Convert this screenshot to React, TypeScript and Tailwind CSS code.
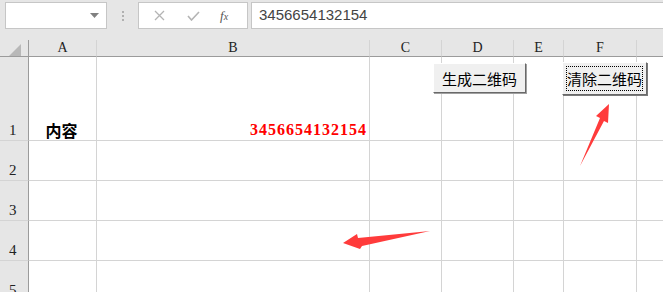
import React from 'react';

const cols = [
  { label: '', w: 'w-[29px]' },
  { label: 'A', w: 'w-[68px]' },
  { label: 'B', w: 'w-[273px]' },
  { label: 'C', w: 'w-[72px]' },
  { label: 'D', w: 'w-[72px]' },
  { label: 'E', w: 'w-[50px]' },
  { label: 'F', w: 'w-[73px]' },
  { label: '', w: 'w-[37px]' },
];

const rows = [
  { n: '1', h: 'h-[84px]' },
  { n: '2', h: 'h-[40px]' },
  { n: '3', h: 'h-[40px]' },
  { n: '4', h: 'h-[40px]' },
  { n: '5', h: 'h-[40px]' },
];

function TopBar() {
  return (
    <div className="flex h-[40px] items-start gap-0 pt-[2px] pl-[5px]">
      <div className="flex h-[27px] w-[102px] items-center justify-end border border-[#c6c6c6] bg-white pr-[7px]">
        <svg width="9" height="5" viewBox="0 0 9 5">
          <path d="M0 0h9L4.5 5z" fill="#808080" />
        </svg>
      </div>
      <div className="flex h-[27px] w-[31px] flex-col items-center justify-center gap-[2px]">
        <span className="h-[2px] w-[2px] bg-[#b0b0b0]" />
        <span className="h-[2px] w-[2px] bg-[#b0b0b0]" />
        <span className="h-[2px] w-[2px] bg-[#b0b0b0]" />
      </div>
      <div className="flex h-[27px] w-[110px] items-center border border-[#c6c6c6] bg-white">
        <svg className="ml-[15px]" width="11" height="11" viewBox="0 0 11 11">
          <path d="M1 1l9 9M10 1l-9 9" stroke="#b4b4b4" strokeWidth="1.3" />
        </svg>
        <svg className="ml-[22px]" width="13" height="10" viewBox="0 0 13 10">
          <path d="M1 5l3.5 4L12 1" stroke="#b4b4b4" strokeWidth="1.6" fill="none" />
        </svg>
        <span className="ml-[20px] font-['Liberation_Serif'] text-[13px] italic leading-none text-[#555]">
          f<span className="text-[10px]">x</span>
        </span>
      </div>
      <div className="ml-[3px] flex h-[27px] flex-1 items-center border border-[#c6c6c6] border-r-0 bg-white pl-[7px] font-['Liberation_Sans'] text-[15px] text-[#444]">
        3456654132154
      </div>
    </div>
  );
}

function Grid() {
  return (
    <div className="flex flex-col">
      <div className="flex h-[17px]">
        {cols.map((c, i) => (
          <div
            key={i}
            className={`${c.w} flex shrink-0 items-center justify-center border-b border-b-[#9b9b9b] ${
              i === 0 ? 'border-r border-r-[#9b9b9b]' : 'border-r border-r-[#d4d4d4]'
            } bg-[#e6e6e6] font-['Liberation_Serif'] text-[14px] leading-none text-[#222]`}
          >
            {i === 0 ? (
              <svg className="ml-[2px] mt-[4px]" width="12" height="12" viewBox="0 0 12 12">
                <path d="M12 0v12H0z" fill="#b8b8b8" />
              </svg>
            ) : (
              c.label
            )}
          </div>
        ))}
      </div>
      {rows.map((r) => (
        <div key={r.n} className={`flex ${r.h}`}>
          {cols.map((c, i) =>
            i === 0 ? (
              <div
                key={i}
                className={`${c.w} flex shrink-0 items-end border-b border-r border-b-[#d4d4d4] border-r-[#9b9b9b] bg-[#e6e6e6] pb-[1px] pl-[9px] font-['Liberation_Serif'] text-[15px] leading-[18px] text-[#222]`}
              >
                {r.n}
              </div>
            ) : (
              <div
                key={i}
                className={`${c.w} flex shrink-0 items-end border-b border-r border-[#d4d4d4] bg-white`}
              >
                {r.n === '1' && c.label === 'A' && (
                  <span className="w-full pr-[2px] text-center font-['Noto_Sans_CJK_SC',sans-serif] text-[16px] font-bold leading-[19px] text-black">
                    内容
                  </span>
                )}
                {r.n === '1' && c.label === 'B' && (
                  <span className="w-full pb-[1px] pr-[2px] text-right font-['Liberation_Serif',serif] text-[16px] font-bold leading-[18px] tracking-[1px] text-[#ff0000]">
                    3456654132154
                  </span>
                )}
              </div>
            )
          )}
        </div>
      ))}
    </div>
  );
}

export default function App() {
  return (
    <div className="relative h-[292px] w-[663px] overflow-hidden bg-[#e6e6e6]">
      <TopBar />
      <Grid />
      <button className="absolute left-[433px] top-[63px] flex h-[30px] w-[93px] items-center justify-center border border-b-[#696969] border-l-white border-r-[#696969] border-t-white bg-[#f0f0f0] font-['Noto_Sans_CJK_SC',sans-serif] text-[15px] leading-none text-black shadow-[1px_1px_0_#a0a0a0]">
        生成二维码
      </button>
      <button className="absolute left-[562px] top-[62px] flex h-[33px] w-[85px] items-center justify-center border border-b-[#696969] border-l-white border-r-[#696969] border-t-white bg-[#f0f0f0] p-[3px] text-black shadow-[1px_1px_0_#7a7a7a]">
        <span className="flex h-full w-full items-center justify-center border border-dotted border-black font-['Noto_Sans_CJK_SC',sans-serif] text-[15px] leading-none">
          清除二维码
        </span>
      </button>
      <svg className="pointer-events-none absolute left-0 top-0" width="663" height="292" viewBox="0 0 663 292">
        <path d="M609 104L596 116L600 118L580 166L604 121L608 123Z" fill="#ff3b3b" />
        <path d="M343 243L357 234L358 238L430 231L362 246L360 249Z" fill="#ff3b3b" />
      </svg>
    </div>
  );
}
